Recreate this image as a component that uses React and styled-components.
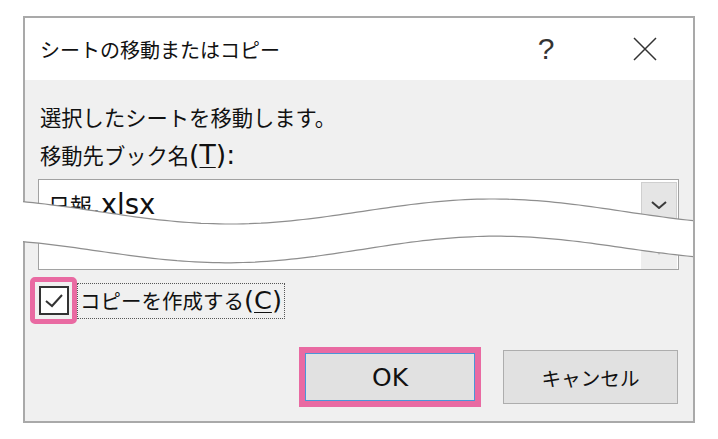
import React from "react";
import styled, { createGlobalStyle } from "styled-components";

const GlobalStyle = createGlobalStyle`
  body {
    margin: 0;
    background: #fff;
    font-family: "Noto Sans CJK JP", sans-serif;
    color: #111;
  }
`;

// white torn band that cuts the dialog in two
const waveTop = (x) => 211.5 + 12.5 * Math.cos((Math.PI * (x - 230)) / 263);
const waveGap = (x) => 40 - (4 * (x - 23)) / 672;

const buildWave = () => {
  const xs = [];
  for (let x = 21; x <= 697; x += 6) xs.push(x);
  const top = xs.map((x) => [x, waveTop(x)]);
  const bottom = xs.map((x) => [x, waveTop(x) + waveGap(x)]);
  const line = (pts) => pts.map((p, i) => (i ? "L" : "M") + p[0] + "," + p[1].toFixed(1)).join(" ");
  const fill = line(top) + " " + line([...bottom].reverse()).replace("M", "L") + " Z";
  return { fill, top: line(top), bottom: line(bottom) };
};

const wave = buildWave();

const App = () => {
  return (
    <Page>
      <GlobalStyle />
      <Dialog>
        <TitleBar>
          <Title>シートの移動またはコピー</Title>
          <HelpButton>?</HelpButton>
          <CloseButton>
            <svg width="24" height="24" viewBox="0 0 24 24">
              <path d="M1 1 L23 23 M23 1 L1 23" stroke="#333" strokeWidth="1.5" fill="none" />
            </svg>
          </CloseButton>
        </TitleBar>

        <Body>
          <Line>選択したシートを移動します。</Line>
          <Line>
            移動先ブック名<Latin>(<U>T</U>):</Latin>
          </Line>

          <FieldBox>
            <ComboRow>
              <ComboText>
                日報<Latin>.xlsx</Latin>
              </ComboText>
              <DropButton>
                <svg width="16" height="8" viewBox="0 0 16 8">
                  <path d="M1 1 L8 7 L15 1" stroke="#3a3a3a" strokeWidth="2" fill="none" />
                </svg>
              </DropButton>
            </ComboRow>
            <ListRow>
              <ScrollTrack>
                <svg width="12" height="8" viewBox="0 0 12 8">
                  <path d="M0 0 L12 0 L6 8 Z" fill="#c4c4c4" />
                </svg>
              </ScrollTrack>
            </ListRow>
          </FieldBox>

          <CheckRow>
            <Highlight>
              <CheckBox>
                <svg width="20" height="16" viewBox="0 0 20 16">
                  <path d="M2 8 L8 13 L18 2" stroke="#333" strokeWidth="2" fill="none" />
                </svg>
              </CheckBox>
            </Highlight>
            <CheckLabel>
              コピーを作成する<Latin>(<U>C</U>)</Latin>
            </CheckLabel>
          </CheckRow>

          <ButtonRow>
            <Button primary>
              <Latin>OK</Latin>
            </Button>
            <Button>キャンセル</Button>
          </ButtonRow>
        </Body>

        <Wave width="672" height="407" viewBox="23 16 672 407">
          <path d={wave.fill} fill="#fff" />
          <path d={wave.top} stroke="#8e8e8e" strokeWidth="1.2" fill="none" />
          <path d={wave.bottom} stroke="#8e8e8e" strokeWidth="1.2" fill="none" />
        </Wave>
      </Dialog>
    </Page>
  );
};

const Page = styled.div`
  width: 718px;
  height: 439px;
  padding: 16px 0 0 23px;
  box-sizing: border-box;
`;

const Dialog = styled.div`
  position: relative;
  width: 672px;
  height: 407px;
  box-sizing: border-box;
  border: 2px solid #a9a9a9;
  display: flex;
  flex-direction: column;
  background: #f0f0f0;
`;

const TitleBar = styled.div`
  height: 62px;
  flex-shrink: 0;
  background: #fff;
  display: flex;
  align-items: center;
  padding: 0 25px 0 15px;
`;

const Title = styled.span`
  flex: 1;
  font-size: 20px;
  color: #111;
`;

const HelpButton = styled.span`
  width: 46px;
  margin-right: 53px;
  text-align: center;
  font-family: "Liberation Sans", sans-serif;
  font-size: 30px;
  color: #333;
`;

const CloseButton = styled.span`
  width: 46px;
  height: 40px;
  display: flex;
  align-items: center;
  justify-content: center;
`;

const Body = styled.div`
  flex: 1;
  display: flex;
  flex-direction: column;
  padding: 18px 14px 14px 13px;
`;

const Line = styled.div`
  padding-left: 2px;
  font-size: 21.3px;
  line-height: 38px;
  color: #111;
  white-space: nowrap;
`;

const Latin = styled.span`
  font-family: "DejaVu Sans", sans-serif;
  font-size: 1.25em;
`;

const U = styled.span`
  text-decoration: underline;
  text-decoration-thickness: 1px;
  text-underline-offset: 3px;
`;

const FieldBox = styled.div`
  margin-top: 5px;
  height: 91px;
  box-sizing: border-box;
  border: 1px solid #a2a2a2;
  background: #fff;
  display: flex;
  flex-direction: column;
`;

const ComboRow = styled.div`
  height: 44px;
  flex-shrink: 0;
  display: flex;
`;

const ComboText = styled.div`
  flex: 1;
  padding: 5px 0 0 9px;
  font-size: 22px;
  line-height: 38px;
  color: #111;
`;

const DropButton = styled.div`
  width: 36px;
  margin: 2px 1px 0 0;
  box-sizing: border-box;
  background: #e5e5e5;
  border: 1px solid #cfcfcf;
  border-bottom: none;
  display: flex;
  justify-content: center;
  align-items: flex-start;
  padding-top: 18px;
`;

const ListRow = styled.div`
  flex: 1;
  display: flex;
  justify-content: flex-end;
`;

const ScrollTrack = styled.div`
  width: 36px;
  margin-right: 1px;
  background: #eeeeee;
  display: flex;
  justify-content: center;
  align-items: flex-end;
  padding-bottom: 14px;
  box-sizing: border-box;
`;

const CheckRow = styled.div`
  margin: 7px 0 0 -8px;
  height: 47px;
  display: flex;
  align-items: center;
`;

const Highlight = styled.div`
  width: 47px;
  height: 47px;
  box-sizing: border-box;
  border: 5px solid #e96aa2;
  border-radius: 5px;
  display: flex;
  align-items: center;
  justify-content: center;
`;

const CheckBox = styled.div`
  width: 30px;
  height: 29px;
  box-sizing: border-box;
  border: 2px solid #333;
  background: #fff;
  display: flex;
  align-items: center;
  justify-content: center;
`;

const CheckLabel = styled.div`
  height: 36px;
  box-sizing: border-box;
  border: 1px dotted #555;
  padding: 0 2px;
  font-size: 20.5px;
  line-height: 32px;
  color: #111;
  white-space: nowrap;
`;

const ButtonRow = styled.div`
  margin-top: auto;
  height: 60px;
  padding-right: 1px;
  display: flex;
  justify-content: flex-end;
  align-items: center;
  gap: 26px;
`;

const Button = styled.div`
  width: ${(p) => (p.primary ? "174px" : "175px")};
  height: ${(p) => (p.primary ? "52px" : "54px")};
  box-sizing: border-box;
  background: #e1e1e1;
  border: ${(p) => (p.primary ? "2px solid #e96aa2" : "1px solid #adadad")};
  box-shadow: ${(p) => (p.primary ? "0 0 0 4px #e96aa2, inset 0 0 0 1px #4a95d8" : "none")};
  display: flex;
  align-items: center;
  justify-content: center;
  font-size: 19.6px;
  color: #111;

  ${Latin} {
    font-size: 25px;
  }
`;

const Wave = styled.svg`
  position: absolute;
  left: -2px;
  top: -2px;
  pointer-events: none;
`;

export default App;
